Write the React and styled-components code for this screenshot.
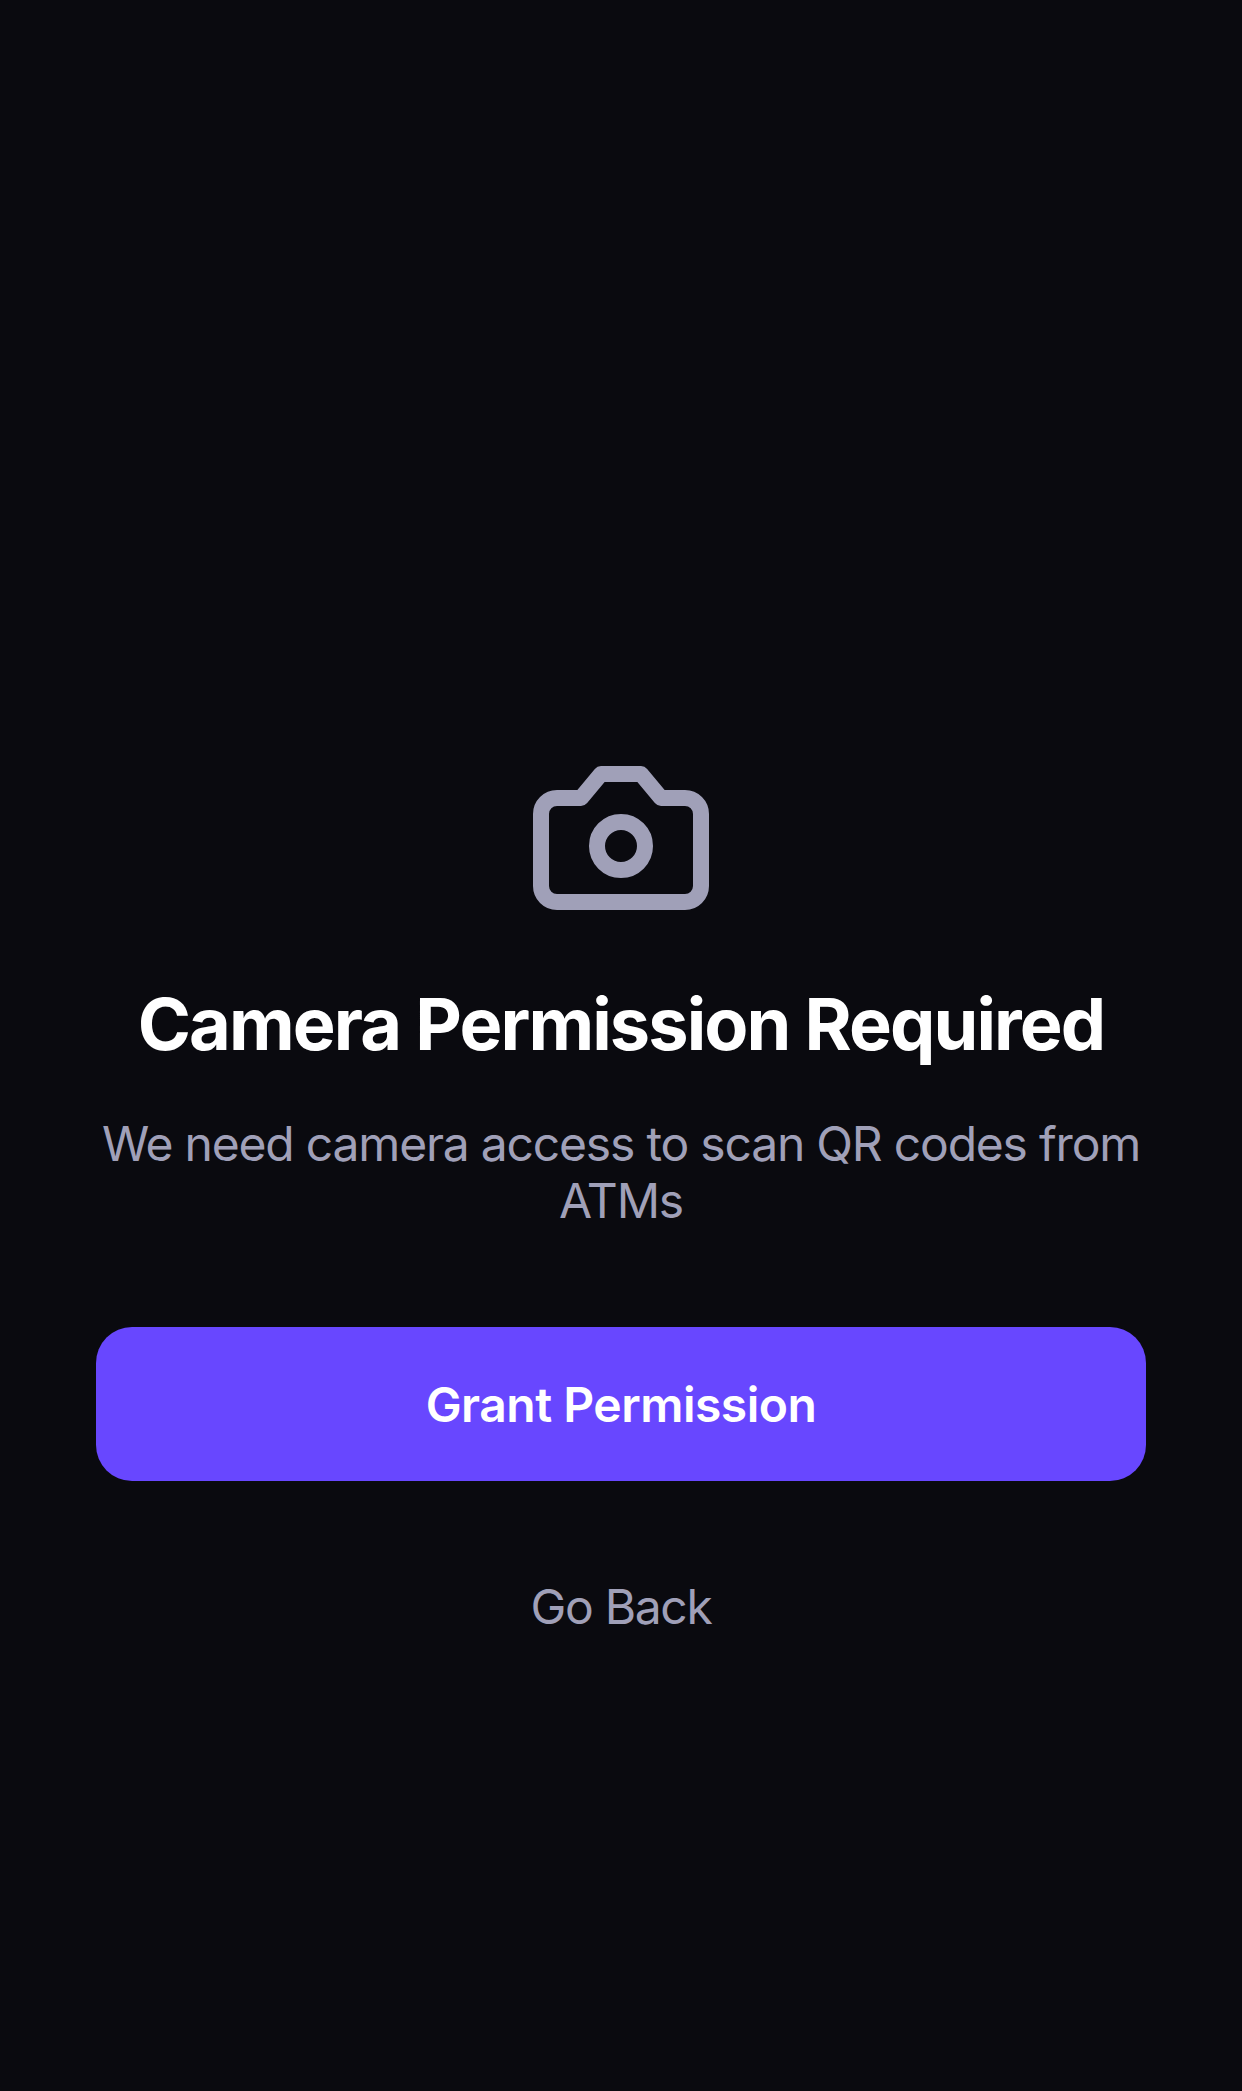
import styled, { createGlobalStyle } from "styled-components";

const Global = createGlobalStyle`
  html, body { margin: 0; padding: 0; background: #0a0a0f; }
  body { font-family: Inter, "Liberation Sans", sans-serif; }
`;

const Screen = styled.div`
  width: 1242px;
  height: 2091px;
  box-sizing: border-box;
  padding: 742px 96px 0;
  background: #0a0a0f;
  display: flex;
  flex-direction: column;
  align-items: center;
`;

const Icon = styled.svg`
  width: 192px;
  height: 192px;
  color: #a0a0b8;
  display: block;
  flex-shrink: 0;
`;

const Title = styled.h1`
  margin: 47px 0 0;
  font-size: 72px;
  line-height: 86px;
  font-weight: 700;
  letter-spacing: -1.9px;
  color: #ffffff;
  text-align: center;
  white-space: nowrap;
`;

const Message = styled.p`
  margin: 48px 0 0;
  font-size: 48px;
  line-height: 57px;
  font-weight: 400;
  letter-spacing: -1.2px;
  color: #a0a0b8;
  text-align: center;
`;

const PrimaryButton = styled.button`
  margin-top: 98px;
  width: 100%;
  height: 154px;
  flex-shrink: 0;
  border: 0;
  border-radius: 36px;
  background: #6847ff;
  color: #ffffff;
  font: 600 48px Inter, "Liberation Sans", sans-serif;
  letter-spacing: -0.5px;
`;

const LinkButton = styled.button`
  margin-top: 72px;
  height: 106px;
  flex-shrink: 0;
  border: 0;
  padding: 0 48px;
  background: none;
  color: #a0a0b8;
  font: 400 48px Inter, "Liberation Sans", sans-serif;
  letter-spacing: -1.35px;
`;

export default function App() {
  return (
    <>
      <Global />
      <Screen>
        <Icon viewBox="0 0 24 24" fill="none" stroke="currentColor" strokeWidth="2" strokeLinecap="round" strokeLinejoin="round">
          <path d="M14.5 4h-5L7 7H4a2 2 0 0 0-2 2v9a2 2 0 0 0 2 2h16a2 2 0 0 0 2-2V9a2 2 0 0 0-2-2h-3l-2.5-3z" />
          <circle cx="12" cy="13" r="3" />
        </Icon>
        <Title>Camera Permission Required</Title>
        <Message>We need camera access to scan QR codes from ATMs</Message>
        <PrimaryButton>Grant Permission</PrimaryButton>
        <LinkButton>Go Back</LinkButton>
      </Screen>
    </>
  );
}
